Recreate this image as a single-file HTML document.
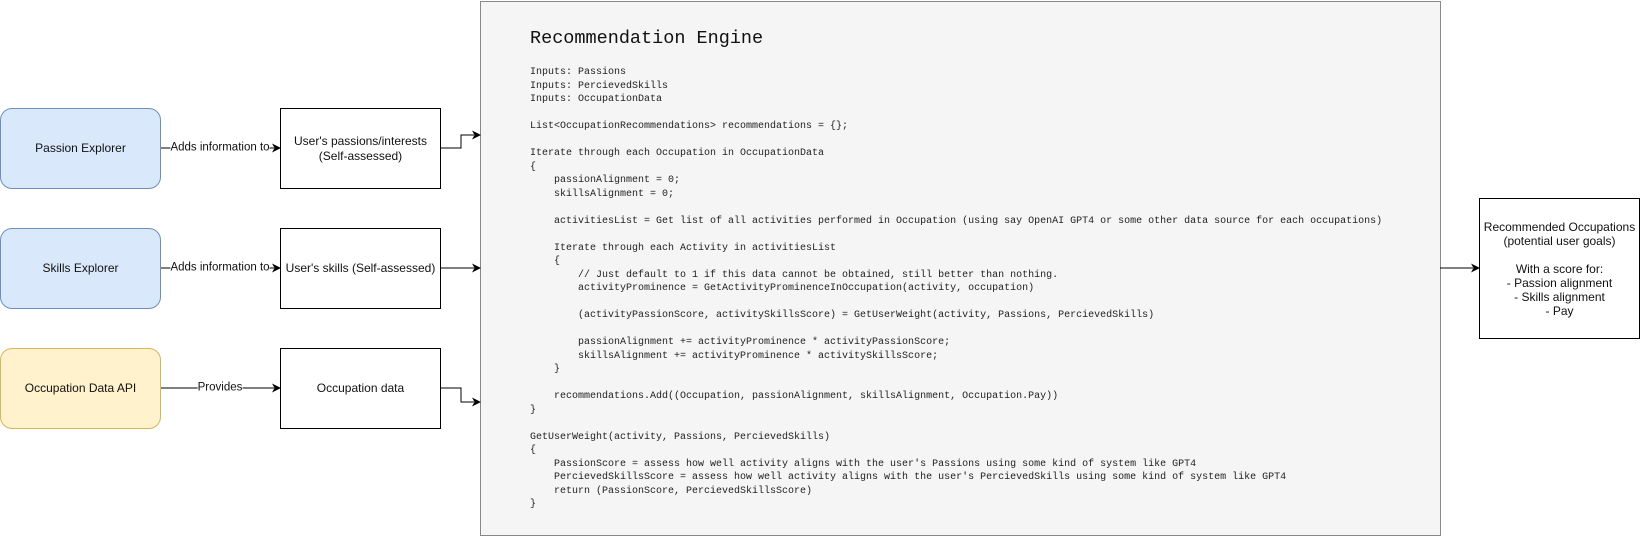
<!DOCTYPE html>
<html><head><meta charset="utf-8"><style>
*{margin:0;padding:0;box-sizing:border-box}
body{width:1641px;height:536px;background:#fff;position:relative;overflow:hidden;font-family:"Liberation Sans",Arial,sans-serif;color:#111}
.b{position:absolute;display:flex;align-items:center;justify-content:center;text-align:center;font-size:12px;line-height:15px}
.blue{background:#dae8fc;border:1px solid #6c8ebf;border-radius:12px}
.yel{background:#fff2cc;border:1px solid #d6b656;border-radius:12px}
.w{background:#fff;border:1px solid #000}
.lbl{position:absolute;font-size:11.5px;background:#fff;line-height:13px;transform:translate(-50%,-50%);white-space:nowrap}
pre{position:absolute;left:530px;top:66px;font-family:"Liberation Mono",monospace;font-size:10px;line-height:13.5px;color:#222}
</style></head><body>
<div style="position:absolute;left:480px;top:1px;width:961px;height:535px;background:#f5f5f5;border:1px solid #888"></div>
<div style="position:absolute;left:530px;top:28px;font-family:'Liberation Mono',monospace;font-size:18.5px;color:#111">Recommendation Engine</div>
<pre>Inputs: Passions
Inputs: PercievedSkills
Inputs: OccupationData

List&lt;OccupationRecommendations&gt; recommendations = {};

Iterate through each Occupation in OccupationData
{
    passionAlignment = 0;
    skillsAlignment = 0;

    activitiesList = Get list of all activities performed in Occupation (using say OpenAI GPT4 or some other data source for each occupations)

    Iterate through each Activity in activitiesList
    {
        // Just default to 1 if this data cannot be obtained, still better than nothing.
        activityProminence = GetActivityProminenceInOccupation(activity, occupation)

        (activityPassionScore, activitySkillsScore) = GetUserWeight(activity, Passions, PercievedSkills)

        passionAlignment += activityProminence * activityPassionScore;
        skillsAlignment += activityProminence * activitySkillsScore;
    }

    recommendations.Add((Occupation, passionAlignment, skillsAlignment, Occupation.Pay))
}

GetUserWeight(activity, Passions, PercievedSkills)
{
    PassionScore = assess how well activity aligns with the user's Passions using some kind of system like GPT4
    PercievedSkillsScore = assess how well activity aligns with the user's PercievedSkills using some kind of system like GPT4
    return (PassionScore, PercievedSkillsScore)
}</pre>
<svg style="position:absolute;left:0;top:0" width="1641" height="536">
<g stroke="#000" stroke-width="1" fill="none">
<path d="M160 148H274"/><path d="M160 268H274"/><path d="M160 388H274"/>
<path d="M440 148H461V135H474"/><path d="M440 268H474"/><path d="M440 388H461V402H474"/>
<path d="M1440 268H1473"/>
</g>
<g fill="#000">
<path d="M281 148l-9-4.5 2.5 4.5-2.5 4.5z"/><path d="M281 268l-9-4.5 2.5 4.5-2.5 4.5z"/><path d="M281 388l-9-4.5 2.5 4.5-2.5 4.5z"/>
<path d="M481 135l-9-4.5 2.5 4.5-2.5 4.5z"/><path d="M481 268l-9-4.5 2.5 4.5-2.5 4.5z"/><path d="M481 402l-9-4.5 2.5 4.5-2.5 4.5z"/>
<path d="M1480 268l-9-4.5 2.5 4.5-2.5 4.5z"/>
</g></svg>
<div class="b blue" style="left:0;top:108px;width:161px;height:81px">Passion Explorer</div>
<div class="b blue" style="left:0;top:228px;width:161px;height:81px">Skills Explorer</div>
<div class="b yel" style="left:0;top:348px;width:161px;height:81px">Occupation Data API</div>
<div class="b w" style="left:280px;top:108px;width:161px;height:81px">User's passions/interests<br>(Self-assessed)</div>
<div class="b w" style="left:280px;top:228px;width:161px;height:81px">User's skills (Self-assessed)</div>
<div class="b w" style="left:280px;top:348px;width:161px;height:81px">Occupation data</div>
<div class="lbl" style="left:220px;top:148px">Adds information to</div>
<div class="lbl" style="left:220px;top:268px">Adds information to</div>
<div class="lbl" style="left:220px;top:388px">Provides</div>
<div class="b w" style="left:1479px;top:198px;width:161px;height:141px;line-height:14px">Recommended Occupations<br>(potential user goals)<br><br>With a score for:<br>- Passion alignment<br>- Skills alignment<br>- Pay</div>
</body></html>
